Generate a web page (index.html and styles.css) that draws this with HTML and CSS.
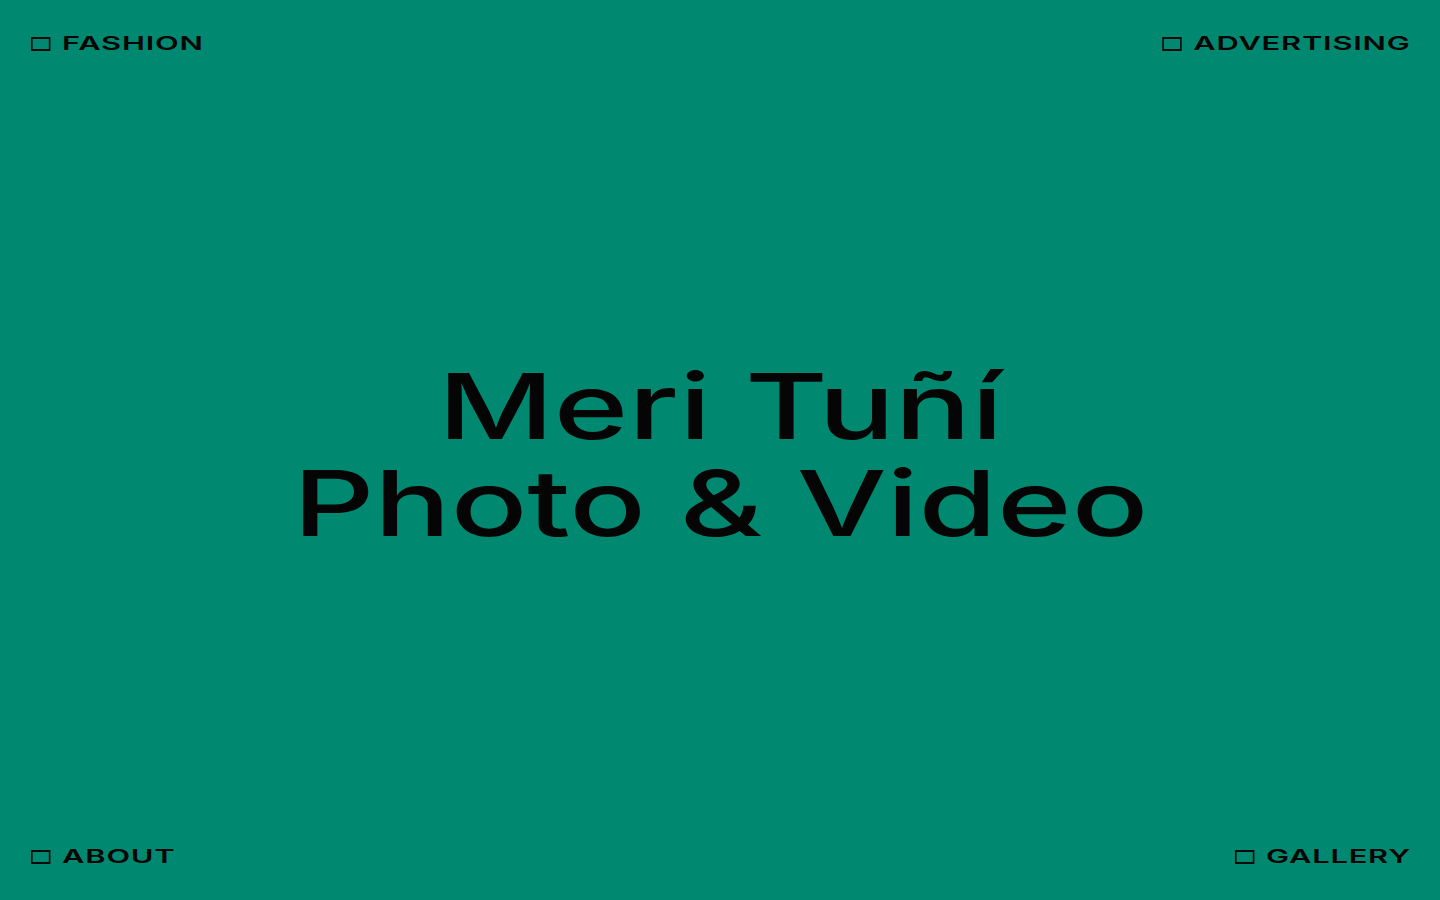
FILE: index.html
```html
<!DOCTYPE html>
<html lang="en">
<head>
<meta charset="utf-8">
<title>Meri Tuñí Photo &amp; Video</title>
<link rel="stylesheet" href="styles.css">
</head>
<body>
<div class="page">
  <nav class="row top">
    <a class="link start" href="#"><span class="box"></span><span class="label">FASHION</span></a>
    <a class="link end" href="#"><span class="box"></span><span class="label">ADVERTISING</span></a>
  </nav>
  <main class="hero">
    <h1 class="title">Meri Tuñí<br>Photo &amp; Video</h1>
  </main>
  <nav class="row bottom">
    <a class="link start" href="#"><span class="box"></span><span class="label">ABOUT</span></a>
    <a class="link end" href="#"><span class="box"></span><span class="label">GALLERY</span></a>
  </nav>
</div>
</body>
</html>
```

FILE: styles.css
```css
html, body {
  margin: 0;
  padding: 0;
  height: 100%;
}
body {
  background: #008970;
  color: #050505;
  font-family: Inter, "Liberation Sans", sans-serif;
  overflow: hidden;
}
.page {
  height: 900px;
  display: flex;
  flex-direction: column;
  padding: 34px 30px 33px 31px;
  box-sizing: border-box;
}
.row {
  display: flex;
  justify-content: space-between;
  align-items: center;
  height: 20px;
}
.link {
  display: flex;
  align-items: center;
  gap: 6.8px;
  color: inherit;
  text-decoration: none;
  transform: scaleX(1.62);
}
.link.start {
  transform-origin: left center;
}
.link.end {
  transform-origin: right center;
}
.box {
  width: 12.4px;
  height: 14px;
  box-sizing: border-box;
  border: 2px solid #0a0a0a;
  border-left-width: 1.4px;
  border-right-width: 1.4px;
  flex: none;
}
.label {
  font-size: 19px;
  font-weight: 600;
  letter-spacing: 0.5px;
  line-height: 20px;
  margin-right: -0.5px;
}
.hero {
  flex: 1;
  display: flex;
  align-items: center;
  justify-content: center;
  padding-top: 8px;
}
.title {
  margin: 0;
  font-size: 91px;
  font-weight: 500;
  line-height: 97px;
  text-align: center;
  transform: scaleX(1.395);
  letter-spacing: 0;
}
```
